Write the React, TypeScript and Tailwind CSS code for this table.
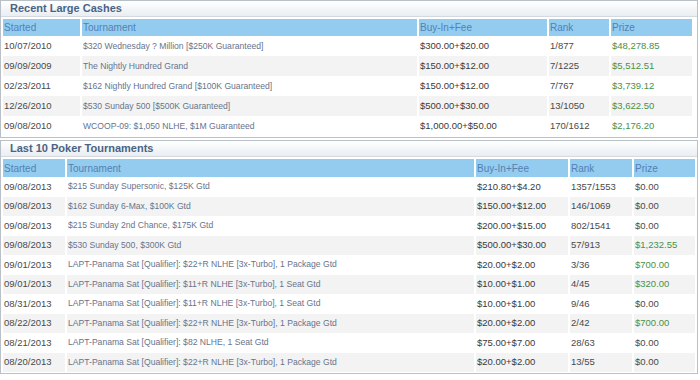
import React from "react";

type Row = {
  started: string;
  name: string;
  buyIn: string;
  rank: string;
  prize: string;
};

const recentCashes: Row[] = [
  { started: "10/07/2010", name: "$320 Wednesday ? Million [$250K Guaranteed]", buyIn: "$300.00+$20.00", rank: "1/877", prize: "$48,278.85" },
  { started: "09/09/2009", name: "The Nightly Hundred Grand", buyIn: "$150.00+$12.00", rank: "7/1225", prize: "$5,512.51" },
  { started: "02/23/2011", name: "$162 Nightly Hundred Grand [$100K Guaranteed]", buyIn: "$150.00+$12.00", rank: "7/767", prize: "$3,739.12" },
  { started: "12/26/2010", name: "$530 Sunday 500 [$500K Guaranteed]", buyIn: "$500.00+$30.00", rank: "13/1050", prize: "$3,622.50" },
  { started: "09/08/2010", name: "WCOOP-09: $1,050 NLHE, $1M Guaranteed", buyIn: "$1,000.00+$50.00", rank: "170/1612", prize: "$2,176.20" },
];

const lastTen: Row[] = [
  { started: "09/08/2013", name: "$215 Sunday Supersonic, $125K Gtd", buyIn: "$210.80+$4.20", rank: "1357/1553", prize: "$0.00" },
  { started: "09/08/2013", name: "$162 Sunday 6-Max, $100K Gtd", buyIn: "$150.00+$12.00", rank: "146/1069", prize: "$0.00" },
  { started: "09/08/2013", name: "$215 Sunday 2nd Chance, $175K Gtd", buyIn: "$200.00+$15.00", rank: "802/1541", prize: "$0.00" },
  { started: "09/08/2013", name: "$530 Sunday 500, $300K Gtd", buyIn: "$500.00+$30.00", rank: "57/913", prize: "$1,232.55" },
  { started: "09/01/2013", name: "LAPT-Panama Sat [Qualifier]: $22+R NLHE [3x-Turbo], 1 Package Gtd", buyIn: "$20.00+$2.00", rank: "3/36", prize: "$700.00" },
  { started: "09/01/2013", name: "LAPT-Panama Sat [Qualifier]: $11+R NLHE [3x-Turbo], 1 Seat Gtd", buyIn: "$10.00+$1.00", rank: "4/45", prize: "$320.00" },
  { started: "08/31/2013", name: "LAPT-Panama Sat [Qualifier]: $11+R NLHE [3x-Turbo], 1 Seat Gtd", buyIn: "$10.00+$1.00", rank: "9/46", prize: "$0.00" },
  { started: "08/22/2013", name: "LAPT-Panama Sat [Qualifier]: $22+R NLHE [3x-Turbo], 1 Package Gtd", buyIn: "$20.00+$2.00", rank: "2/42", prize: "$700.00" },
  { started: "08/21/2013", name: "LAPT-Panama Sat [Qualifier]: $82 NLHE, 1 Seat Gtd", buyIn: "$75.00+$7.00", rank: "28/63", prize: "$0.00" },
  { started: "08/20/2013", name: "LAPT-Panama Sat [Qualifier]: $22+R NLHE [3x-Turbo], 1 Package Gtd", buyIn: "$20.00+$2.00", rank: "13/55", prize: "$0.00" },
];

// column widths per panel: started, tournament, buy-in, rank, prize
type Cols = { c1: string; c2: string; c3: string; c4: string; c5: string };

const colsTop: Cols = { c1: "w-[77px]", c2: "w-[335px]", c3: "w-[128px]", c4: "w-[60px]", c5: "w-[81px]" };
const colsBottom: Cols = { c1: "w-[62px]", c2: "w-[407px]", c3: "w-[92px]", c4: "w-[62px]", c5: "w-[61px]" };

function Panel({ title, rows, cols, rowH, headH }: { title: string; rows: Row[]; cols: Cols; rowH: string; headH: string }) {
  return (
    <div className="w-[698px] border border-[#b9c0c7] bg-white">
      {/* Title bar */}
      <div className="h-[16px] flex items-center pl-[9px] bg-gradient-to-b from-white to-[#e9eef2] border-b border-[#d3d9de] text-[11px] font-bold text-[#4a6383]">
        {title}
      </div>

      {/* Column headings */}
      <div className={`flex gap-[2px] px-[2px] mt-[2px] ${headH} text-[10px] text-[#5381b3]`}>
        <div className={`${cols.c1} bg-[#94ccf0] flex items-center pl-[1px]`}>Started</div>
        <div className={`${cols.c2} bg-[#94ccf0] flex items-center pl-[1px]`}>Tournament</div>
        <div className={`${cols.c3} bg-[#94ccf0] flex items-center pl-[1px]`}>Buy-In+Fee</div>
        <div className={`${cols.c4} bg-[#94ccf0] flex items-center pl-[1px]`}>Rank</div>
        <div className={`${cols.c5} bg-[#94ccf0] flex items-center pl-[1px]`}>Prize</div>
      </div>

      {/* Data rows */}
      <div className="pb-[1px]">
        {rows.map((r, i) => {
          const bg = i % 2 === 1 ? "bg-[#f3f3f3]" : "bg-white";
          const won = r.prize !== "$0.00";
          return (
            <div key={i} className={`flex gap-[2px] px-[2px] ${rowH} text-[9.5px]`}>
              <div className={`${cols.c1} ${bg} flex items-center pl-[1px] text-[#4a4a4a]`}>{r.started}</div>
              <div className={`${cols.c2} ${bg} flex items-center pl-[1px] text-[8.6px] text-[#68738c] whitespace-nowrap`}>{r.name}</div>
              <div className={`${cols.c3} ${bg} flex items-center pl-[1px] text-[#3a3a3a]`}>{r.buyIn}</div>
              <div className={`${cols.c4} ${bg} flex items-center pl-[1px] text-[#4a4a4a]`}>{r.rank}</div>
              <div className={`${cols.c5} ${bg} flex items-center pl-[1px] ${won ? "text-[#4a9146]" : "text-[#4a4a4a]"}`}>{r.prize}</div>
            </div>
          );
        })}
      </div>
    </div>
  );
}

export default function App() {
  return (
    <div className="w-[700px] h-[380px] bg-white overflow-hidden font-['Liberation_Sans',Arial,sans-serif]">
      <Panel title="Recent Large Cashes" rows={recentCashes} cols={colsTop} rowH="h-[20px]" headH="h-[17px]" />
      <div className="h-[2px]" />
      <Panel title="Last 10 Poker Tournaments" rows={lastTen} cols={colsBottom} rowH="h-[19.5px]" headH="h-[18px]" />
    </div>
  );
}
